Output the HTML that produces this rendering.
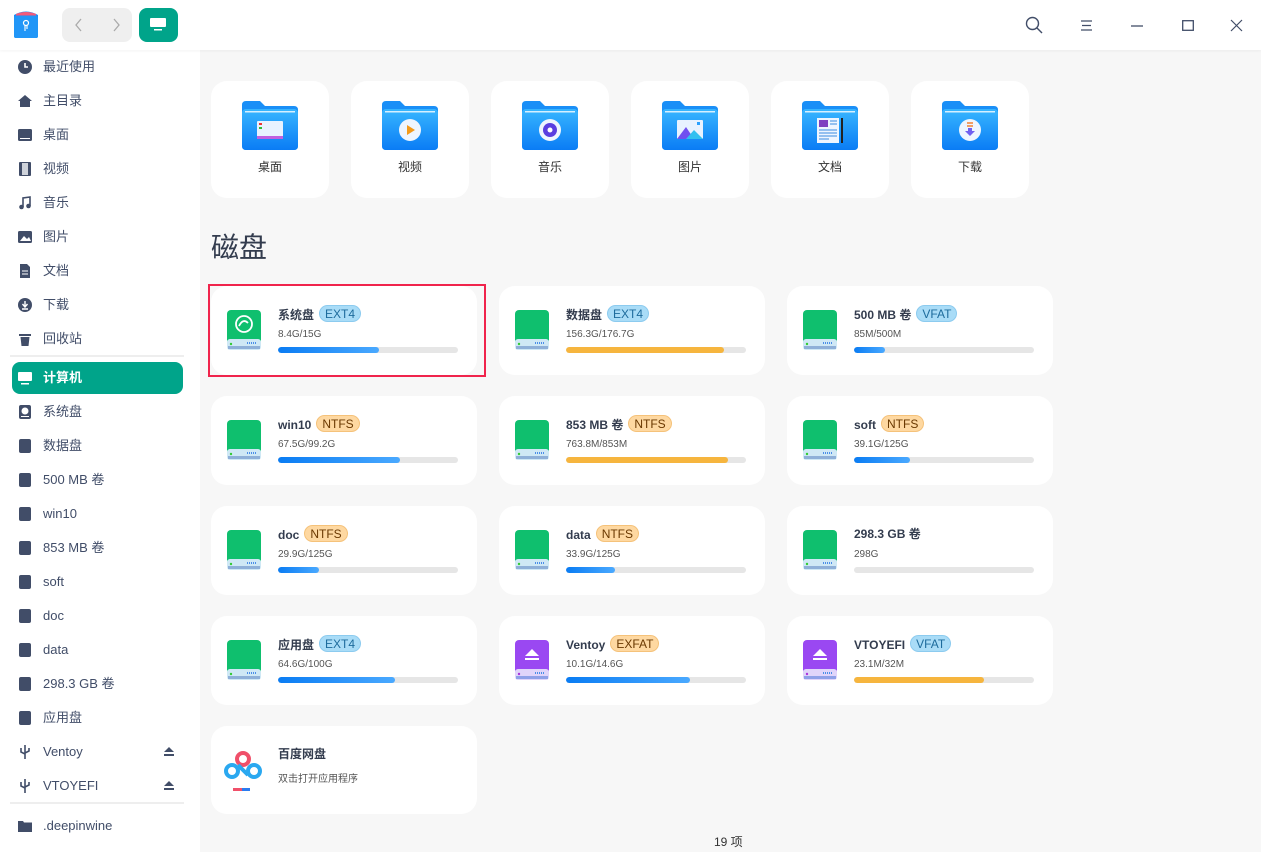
<!DOCTYPE html>
<html><head><meta charset="utf-8">
<style>
*{margin:0;padding:0;box-sizing:border-box}
body{width:1261px;height:852px;overflow:hidden;background:#f7f7f7;font-family:"Liberation Sans","Noto Sans CJK SC",sans-serif;position:relative;color:#414d68}
.side{position:absolute;left:0;top:0;width:200px;height:852px;background:#fff}
.si{position:absolute;left:12px;width:171px;height:32px;font-size:13px;color:#414d68;line-height:32px;padding-left:31px}
.si .ic{position:absolute;left:6px;top:9px;width:14px;height:14px}
.sep{position:absolute;left:10px;width:174px;height:2px;background:#eee}
.top{position:absolute;left:0;top:0;width:1261px;height:50px;background:#fff;box-shadow:0 1px 3px rgba(0,0,0,.05)}
.h{position:absolute;font-size:28px;color:#333c4e;left:211px}
.fc{position:absolute;top:81px;width:118px;height:117px;background:#fff;border-radius:16px}
.fc svg{position:absolute;left:31px;top:20px}
.fc span{position:absolute;left:0;width:118px;text-align:center;top:77px;font-size:12px;color:#333}
.dc{position:absolute;width:266px;height:89px;background:#fff;border-radius:16px}
.dc .icon{position:absolute;left:16px;top:24px}
.dc .nm{position:absolute;left:67px;top:19px;font-size:12px;font-weight:bold;color:#333c4e;white-space:nowrap}
.bd{display:inline-block;font-weight:normal;font-size:12px;padding:0 5px;height:17px;line-height:16px;border-radius:9px;margin-left:5px;vertical-align:1px}
.b1{background:#a9dcf7;color:#1d6b9c;border:1px solid #8ccbef}
.b2{background:#fed8a1;color:#6a3800;border:1px solid #f5c27a}
.dc .sz{position:absolute;left:67px;top:43px;font-size:10px;color:#555}
.dc .bar{position:absolute;left:67px;top:61px;width:180px;height:6px;border-radius:3px;background:#e6e6e6;overflow:hidden}
.bar i{display:block;height:6px;border-radius:3px;background:linear-gradient(90deg,#0a7cf3,#4aa9ff)}
.bar i.o{background:#f6b53e}
</style></head><body>
<div class="side">
<div class="si" style="top:51px"><svg class="ic" viewBox="0 0 14 14"><circle cx="7" cy="7" r="7" fill="#414d68"/><path d="M7 3v4h3" stroke="#fff" stroke-width="1.6" fill="none"/></svg>最近使用</div>
<div class="si" style="top:85px"><svg class="ic" viewBox="0 0 14 14"><path d="M7 1L0 7h2v6h10V7h2z" fill="#414d68"/></svg>主目录</div>
<div class="si" style="top:119px"><svg class="ic" viewBox="0 0 14 14"><rect x="0" y="1" width="14" height="12" rx="1.5" fill="#414d68"/><rect x="2" y="10" width="10" height="1" fill="#fff"/></svg>桌面</div>
<div class="si" style="top:153px"><svg class="ic" viewBox="0 0 14 14"><rect x="1" y="0" width="12" height="14" rx="1" fill="#414d68"/><rect x="4" y="1" width="6" height="12" fill="#fff"/><rect x="4" y="1" width="6" height="12" fill="#8890a2" opacity=".4"/></svg>视频</div>
<div class="si" style="top:187px"><svg class="ic" viewBox="0 0 14 14"><path d="M5 11V2l7-1v9" stroke="#414d68" stroke-width="1.6" fill="none"/><circle cx="3.5" cy="11" r="2.3" fill="#414d68"/><circle cx="10.5" cy="10" r="2.3" fill="#414d68"/></svg>音乐</div>
<div class="si" style="top:221px"><svg class="ic" viewBox="0 0 14 14"><rect x="0" y="1" width="14" height="12" rx="1.5" fill="#414d68"/><path d="M2 11l4-5 3 3 2-2 2 4z" fill="#fff"/></svg>图片</div>
<div class="si" style="top:255px"><svg class="ic" viewBox="0 0 14 14"><path d="M2 0h7l3 3v11H2z" fill="#414d68"/><path d="M4 7h6M4 10h6" stroke="#fff"/></svg>文档</div>
<div class="si" style="top:289px"><svg class="ic" viewBox="0 0 14 14"><circle cx="7" cy="7" r="7" fill="#414d68"/><path d="M7 3v5M4.5 6l2.5 3 2.5-3M4 11h6" stroke="#fff" stroke-width="1.4" fill="none"/></svg>下载</div>
<div class="si" style="top:323px"><svg class="ic" viewBox="0 0 14 14"><path d="M1 2h12v2H1zM2.5 5h9l-1 9h-7z" fill="#414d68"/></svg>回收站</div>
<div class="sep" style="top:355px"></div>
<div class="si" style="top:362px;background:#00a48a;color:#fff;border-radius:8px;font-weight:bold"><svg class="ic" viewBox="0 0 14 14"><rect x="0" y="1" width="14" height="9" rx="1" fill="#fff"/><rect x="3" y="12" width="8" height="1.5" fill="#fff"/></svg>计算机</div>
<div class="si" style="top:396px"><svg class="ic" viewBox="0 0 14 14"><rect x="1" y="0" width="12" height="14" rx="2" fill="#414d68"/><circle cx="7" cy="6" r="3.5" fill="#fff"/><rect x="3" y="11" width="8" height="1" fill="#fff"/></svg>系统盘</div>
<div class="si" style="top:430px"><svg class="ic" viewBox="0 0 14 14"><rect x="1" y="0" width="12" height="14" rx="2" fill="#414d68"/></svg>数据盘</div>
<div class="si" style="top:464px"><svg class="ic" viewBox="0 0 14 14"><rect x="1" y="0" width="12" height="14" rx="2" fill="#414d68"/></svg>500 MB 卷</div>
<div class="si" style="top:498px"><svg class="ic" viewBox="0 0 14 14"><rect x="1" y="0" width="12" height="14" rx="2" fill="#414d68"/></svg>win10</div>
<div class="si" style="top:532px"><svg class="ic" viewBox="0 0 14 14"><rect x="1" y="0" width="12" height="14" rx="2" fill="#414d68"/></svg>853 MB 卷</div>
<div class="si" style="top:566px"><svg class="ic" viewBox="0 0 14 14"><rect x="1" y="0" width="12" height="14" rx="2" fill="#414d68"/></svg>soft</div>
<div class="si" style="top:600px"><svg class="ic" viewBox="0 0 14 14"><rect x="1" y="0" width="12" height="14" rx="2" fill="#414d68"/></svg>doc</div>
<div class="si" style="top:634px"><svg class="ic" viewBox="0 0 14 14"><rect x="1" y="0" width="12" height="14" rx="2" fill="#414d68"/></svg>data</div>
<div class="si" style="top:668px"><svg class="ic" viewBox="0 0 14 14"><rect x="1" y="0" width="12" height="14" rx="2" fill="#414d68"/></svg>298.3 GB 卷</div>
<div class="si" style="top:702px"><svg class="ic" viewBox="0 0 14 14"><rect x="1" y="0" width="12" height="14" rx="2" fill="#414d68"/></svg>应用盘</div>
<div class="si" style="top:736px"><svg class="ic" viewBox="0 0 14 14"><path d="M7 0v14M3 3v4l4 2M11 3v3l-4 2" stroke="#414d68" stroke-width="1.6" fill="none"/></svg>Ventoy<svg style="position:absolute;left:152px;top:11px" width="10" height="9"><path d="M5 0l5 5H0z M0 7h10v2H0z" fill="#414d68"/></svg></div>
<div class="si" style="top:770px"><svg class="ic" viewBox="0 0 14 14"><path d="M7 0v14M3 3v4l4 2M11 3v3l-4 2" stroke="#414d68" stroke-width="1.6" fill="none"/></svg>VTOYEFI<svg style="position:absolute;left:152px;top:11px" width="10" height="9"><path d="M5 0l5 5H0z M0 7h10v2H0z" fill="#414d68"/></svg></div>
<div class="sep" style="top:802px"></div>
<div class="si" style="top:810px"><svg class="ic" viewBox="0 0 14 14"><path d="M0 2h5l1 1.5h8V13H0z" fill="#414d68"/></svg>.deepinwine</div>
</div>

<div class="h" style="top:14px">我的目录</div>
<div class="top">
<svg style="position:absolute;left:12px;top:9px" width="28" height="30" viewBox="0 0 28 30"><path d="M2 6 Q14 -1 26 6 V27 Q26 29 24 29 H4 Q2 29 2 27z" fill="#1e8cf5"/><path d="M4 5 Q14 1 24 5 V6.5 H4z" fill="#f35a7a"/><rect x="2" y="7" width="24" height="22" rx="2" fill="#2196f7"/><circle cx="14" cy="14" r="2.5" stroke="#fff" stroke-width="1.2" fill="none"/><path d="M13 16v6M15 16v4" stroke="#fff" stroke-width="1.1"/></svg>
<div style="position:absolute;left:62px;top:8px;width:70px;height:34px;background:#efefef;border-radius:8px"></div>
<svg style="position:absolute;left:74px;top:18px" width="10" height="14"><path d="M7 1L2 7l5 6" stroke="#aaa" stroke-width="1.3" fill="none"/></svg>
<svg style="position:absolute;left:111px;top:18px" width="10" height="14"><path d="M3 1l5 6-5 6" stroke="#aaa" stroke-width="1.3" fill="none"/></svg>
<div style="position:absolute;left:139px;top:8px;width:39px;height:34px;background:#00a48a;border-radius:8px"></div>
<svg style="position:absolute;left:150px;top:18px" width="16" height="13"><rect x="0" y="0" width="16" height="9" rx="1" fill="#fff"/><rect x="4" y="11" width="8" height="1.5" fill="#fff"/></svg>
<svg style="position:absolute;left:1025px;top:16px" width="18" height="18"><circle cx="7.5" cy="7.5" r="6" stroke="#414d68" stroke-width="1.4" fill="none"/><path d="M12 12l5 5" stroke="#414d68" stroke-width="1.4"/></svg>
<svg style="position:absolute;left:1081px;top:20px" width="12" height="11"><path d="M0 1h11M1 5.5h9M0 10h11" stroke="#414d68" stroke-width="1.2"/></svg>
<svg style="position:absolute;left:1131px;top:25px" width="12" height="2"><path d="M0 1h12" stroke="#414d68" stroke-width="1.3"/></svg>
<svg style="position:absolute;left:1182px;top:20px" width="12" height="11"><rect x=".7" y=".7" width="10.6" height="9.6" stroke="#414d68" stroke-width="1.3" fill="none"/></svg>
<svg style="position:absolute;left:1230px;top:19px" width="13" height="13"><path d="M1 1l11 11M12 1L1 12" stroke="#414d68" stroke-width="1.2"/></svg>
</div>

<svg width="0" height="0" style="position:absolute"><defs><linearGradient id="fg" x1="0" y1="0" x2="0" y2="1"><stop offset="0" stop-color="#38b6ff"/><stop offset="1" stop-color="#0a7cf5"/></linearGradient></defs></svg>
<div class="fc" style="left:211px"><svg width="56" height="50" viewBox="0 0 56 50"><path d="M0 4Q0 0 4 0H18l5 5H52Q56 5 56 9V45Q56 49 52 49H4Q0 49 0 45z" fill="#1a8ff7"/><rect x="0" y="8" width="56" height="41" rx="4" fill="url(#fg)"/><rect x="3" y="10" width="50" height="1.5" fill="#fff" opacity=".8"/><rect x="15" y="20" width="26" height="18" rx="1" fill="#e8f2ff"/><rect x="15" y="35" width="26" height="3" fill="#c060e0"/><rect x="17" y="22" width="3" height="2" fill="#e33"/><rect x="17" y="26" width="3" height="2" fill="#3b3"/></svg><span>桌面</span></div>
<div class="fc" style="left:351px"><svg width="56" height="50" viewBox="0 0 56 50"><path d="M0 4Q0 0 4 0H18l5 5H52Q56 5 56 9V45Q56 49 52 49H4Q0 49 0 45z" fill="#1a8ff7"/><rect x="0" y="8" width="56" height="41" rx="4" fill="url(#fg)"/><rect x="3" y="10" width="50" height="1.5" fill="#fff" opacity=".8"/><circle cx="28" cy="29" r="11" fill="#eef5ff"/><path d="M25 24v10l8-5z" fill="#f39a1a"/></svg><span>视频</span></div>
<div class="fc" style="left:491px"><svg width="56" height="50" viewBox="0 0 56 50"><path d="M0 4Q0 0 4 0H18l5 5H52Q56 5 56 9V45Q56 49 52 49H4Q0 49 0 45z" fill="#1a8ff7"/><rect x="0" y="8" width="56" height="41" rx="4" fill="url(#fg)"/><rect x="3" y="10" width="50" height="1.5" fill="#fff" opacity=".8"/><circle cx="28" cy="29" r="11" fill="#eef5ff"/><circle cx="28" cy="29" r="7" fill="#5a3ee0"/><circle cx="28" cy="29" r="2.5" fill="#fff"/></svg><span>音乐</span></div>
<div class="fc" style="left:631px"><svg width="56" height="50" viewBox="0 0 56 50"><path d="M0 4Q0 0 4 0H18l5 5H52Q56 5 56 9V45Q56 49 52 49H4Q0 49 0 45z" fill="#1a8ff7"/><rect x="0" y="8" width="56" height="41" rx="4" fill="url(#fg)"/><rect x="3" y="10" width="50" height="1.5" fill="#fff" opacity=".8"/><rect x="15" y="19" width="26" height="19" rx="1" fill="#e8f2ff"/><path d="M15 38l9-12 8 12z" fill="#7050f0"/><path d="M24 38l8-9 9 9z" fill="#30c0f0"/><rect x="35" y="21" width="3" height="3" fill="#2aa0ff"/></svg><span>图片</span></div>
<div class="fc" style="left:771px"><svg width="56" height="50" viewBox="0 0 56 50"><path d="M0 4Q0 0 4 0H18l5 5H52Q56 5 56 9V45Q56 49 52 49H4Q0 49 0 45z" fill="#1a8ff7"/><rect x="0" y="8" width="56" height="41" rx="4" fill="url(#fg)"/><rect x="3" y="10" width="50" height="1.5" fill="#fff" opacity=".8"/><rect x="15" y="17" width="22" height="25" fill="#eef5ff"/><rect x="17" y="19" width="9" height="7" fill="#8040c0"/><path d="M28 20h7M28 23h7M17 29h18M17 32h18M17 35h18M17 38h10" stroke="#3a8ae0"/><rect x="39" y="17" width="2" height="25" fill="#222"/></svg><span>文档</span></div>
<div class="fc" style="left:911px"><svg width="56" height="50" viewBox="0 0 56 50"><path d="M0 4Q0 0 4 0H18l5 5H52Q56 5 56 9V45Q56 49 52 49H4Q0 49 0 45z" fill="#1a8ff7"/><rect x="0" y="8" width="56" height="41" rx="4" fill="url(#fg)"/><rect x="3" y="10" width="50" height="1.5" fill="#fff" opacity=".8"/><circle cx="28" cy="29" r="11" fill="#eef5ff"/><path d="M25 22h6M25 25h6" stroke="#f08030" stroke-width="1.5"/><path d="M26 27h4v3h3l-5 5-5-5h3z" fill="#7060f0"/></svg><span>下载</span></div>

<div class="h" style="top:226px">磁盘</div>

<div class="dc" style="left:211px;top:286px"><svg class="icon" width="34" height="40" viewBox="0 0 34 40"><rect x="0" y="0" width="34" height="34" rx="4" fill="#0fbf6e"/><rect x="0" y="29" width="34" height="11" rx="3" fill="#cfe8f5"/><rect x="1" y="36" width="32" height="3" fill="#8fb0d8"/><circle cx="4" cy="34" r="1.2" fill="#3c3"/><path d="M20 33h10" stroke="#4a8ee8" stroke-dasharray="1 1" stroke-width="2"/><circle cx="17" cy="14" r="8" stroke="#fff" stroke-width="1.8" fill="none"/><path d="M12 16q4-8 9-3" stroke="#fff" stroke-width="1.8" fill="none"/></svg><div class="nm">系统盘<span class="bd b1">EXT4</span></div><div class="sz">8.4G/15G</div><div class="bar"><i style="width:56%"></i></div></div>
<div style="position:absolute;left:208px;top:284px;width:278px;height:93px;border:2px solid #f0244c"></div>

<div class="dc" style="left:499px;top:286px"><svg class="icon" width="34" height="40" viewBox="0 0 34 40"><rect x="0" y="0" width="34" height="34" rx="4" fill="#0fbf6e"/><rect x="0" y="29" width="34" height="11" rx="3" fill="#cfe8f5"/><rect x="1" y="36" width="32" height="3" fill="#8fb0d8"/><circle cx="4" cy="34" r="1.2" fill="#3c3"/><path d="M20 33h10" stroke="#4a8ee8" stroke-dasharray="1 1" stroke-width="2"/></svg><div class="nm">数据盘<span class="bd b1">EXT4</span></div><div class="sz">156.3G/176.7G</div><div class="bar"><i class="o" style="width:88%"></i></div></div>
<div class="dc" style="left:787px;top:286px"><svg class="icon" width="34" height="40" viewBox="0 0 34 40"><rect x="0" y="0" width="34" height="34" rx="4" fill="#0fbf6e"/><rect x="0" y="29" width="34" height="11" rx="3" fill="#cfe8f5"/><rect x="1" y="36" width="32" height="3" fill="#8fb0d8"/><circle cx="4" cy="34" r="1.2" fill="#3c3"/><path d="M20 33h10" stroke="#4a8ee8" stroke-dasharray="1 1" stroke-width="2"/></svg><div class="nm">500 MB 卷<span class="bd b1">VFAT</span></div><div class="sz">85M/500M</div><div class="bar"><i style="width:17%"></i></div></div>

<div class="dc" style="left:211px;top:396px"><svg class="icon" width="34" height="40" viewBox="0 0 34 40"><rect x="0" y="0" width="34" height="34" rx="4" fill="#0fbf6e"/><rect x="0" y="29" width="34" height="11" rx="3" fill="#cfe8f5"/><rect x="1" y="36" width="32" height="3" fill="#8fb0d8"/><circle cx="4" cy="34" r="1.2" fill="#3c3"/><path d="M20 33h10" stroke="#4a8ee8" stroke-dasharray="1 1" stroke-width="2"/></svg><div class="nm">win10<span class="bd b2">NTFS</span></div><div class="sz">67.5G/99.2G</div><div class="bar"><i style="width:68%"></i></div></div>
<div class="dc" style="left:499px;top:396px"><svg class="icon" width="34" height="40" viewBox="0 0 34 40"><rect x="0" y="0" width="34" height="34" rx="4" fill="#0fbf6e"/><rect x="0" y="29" width="34" height="11" rx="3" fill="#cfe8f5"/><rect x="1" y="36" width="32" height="3" fill="#8fb0d8"/><circle cx="4" cy="34" r="1.2" fill="#3c3"/><path d="M20 33h10" stroke="#4a8ee8" stroke-dasharray="1 1" stroke-width="2"/></svg><div class="nm">853 MB 卷<span class="bd b2">NTFS</span></div><div class="sz">763.8M/853M</div><div class="bar"><i class="o" style="width:90%"></i></div></div>
<div class="dc" style="left:787px;top:396px"><svg class="icon" width="34" height="40" viewBox="0 0 34 40"><rect x="0" y="0" width="34" height="34" rx="4" fill="#0fbf6e"/><rect x="0" y="29" width="34" height="11" rx="3" fill="#cfe8f5"/><rect x="1" y="36" width="32" height="3" fill="#8fb0d8"/><circle cx="4" cy="34" r="1.2" fill="#3c3"/><path d="M20 33h10" stroke="#4a8ee8" stroke-dasharray="1 1" stroke-width="2"/></svg><div class="nm">soft<span class="bd b2">NTFS</span></div><div class="sz">39.1G/125G</div><div class="bar"><i style="width:31%"></i></div></div>

<div class="dc" style="left:211px;top:506px"><svg class="icon" width="34" height="40" viewBox="0 0 34 40"><rect x="0" y="0" width="34" height="34" rx="4" fill="#0fbf6e"/><rect x="0" y="29" width="34" height="11" rx="3" fill="#cfe8f5"/><rect x="1" y="36" width="32" height="3" fill="#8fb0d8"/><circle cx="4" cy="34" r="1.2" fill="#3c3"/><path d="M20 33h10" stroke="#4a8ee8" stroke-dasharray="1 1" stroke-width="2"/></svg><div class="nm">doc<span class="bd b2">NTFS</span></div><div class="sz">29.9G/125G</div><div class="bar"><i style="width:23%"></i></div></div>
<div class="dc" style="left:499px;top:506px"><svg class="icon" width="34" height="40" viewBox="0 0 34 40"><rect x="0" y="0" width="34" height="34" rx="4" fill="#0fbf6e"/><rect x="0" y="29" width="34" height="11" rx="3" fill="#cfe8f5"/><rect x="1" y="36" width="32" height="3" fill="#8fb0d8"/><circle cx="4" cy="34" r="1.2" fill="#3c3"/><path d="M20 33h10" stroke="#4a8ee8" stroke-dasharray="1 1" stroke-width="2"/></svg><div class="nm">data<span class="bd b2">NTFS</span></div><div class="sz">33.9G/125G</div><div class="bar"><i style="width:27%"></i></div></div>
<div class="dc" style="left:787px;top:506px"><svg class="icon" width="34" height="40" viewBox="0 0 34 40"><rect x="0" y="0" width="34" height="34" rx="4" fill="#0fbf6e"/><rect x="0" y="29" width="34" height="11" rx="3" fill="#cfe8f5"/><rect x="1" y="36" width="32" height="3" fill="#8fb0d8"/><circle cx="4" cy="34" r="1.2" fill="#3c3"/><path d="M20 33h10" stroke="#4a8ee8" stroke-dasharray="1 1" stroke-width="2"/></svg><div class="nm">298.3 GB 卷</div><div class="sz">298G</div><div class="bar"><i style="width:0"></i></div></div>

<div class="dc" style="left:211px;top:616px"><svg class="icon" width="34" height="40" viewBox="0 0 34 40"><rect x="0" y="0" width="34" height="34" rx="4" fill="#0fbf6e"/><rect x="0" y="29" width="34" height="11" rx="3" fill="#cfe8f5"/><rect x="1" y="36" width="32" height="3" fill="#8fb0d8"/><circle cx="4" cy="34" r="1.2" fill="#3c3"/><path d="M20 33h10" stroke="#4a8ee8" stroke-dasharray="1 1" stroke-width="2"/></svg><div class="nm">应用盘<span class="bd b1">EXT4</span></div><div class="sz">64.6G/100G</div><div class="bar"><i style="width:65%"></i></div></div>
<div class="dc" style="left:499px;top:616px"><svg class="icon" width="34" height="40" viewBox="0 0 34 40"><rect x="0" y="0" width="34" height="34" rx="4" fill="#9a48f2"/><rect x="0" y="29" width="34" height="11" rx="3" fill="#e0d4fa"/><rect x="1" y="36" width="32" height="3" fill="#8fa0e8"/><circle cx="4" cy="34" r="1.2" fill="#a3d"/><path d="M20 33h10" stroke="#4a8ee8" stroke-dasharray="1 1" stroke-width="2"/><path d="M17 9l7 7H10z" fill="#fff"/><rect x="10" y="18" width="14" height="2" fill="#fff"/></svg><div class="nm">Ventoy<span class="bd b2">EXFAT</span></div><div class="sz">10.1G/14.6G</div><div class="bar"><i style="width:69%"></i></div></div>
<div class="dc" style="left:787px;top:616px"><svg class="icon" width="34" height="40" viewBox="0 0 34 40"><rect x="0" y="0" width="34" height="34" rx="4" fill="#9a48f2"/><rect x="0" y="29" width="34" height="11" rx="3" fill="#e0d4fa"/><rect x="1" y="36" width="32" height="3" fill="#8fa0e8"/><circle cx="4" cy="34" r="1.2" fill="#a3d"/><path d="M20 33h10" stroke="#4a8ee8" stroke-dasharray="1 1" stroke-width="2"/><path d="M17 9l7 7H10z" fill="#fff"/><rect x="10" y="18" width="14" height="2" fill="#fff"/></svg><div class="nm">VTOYEFI<span class="bd b1">VFAT</span></div><div class="sz">23.1M/32M</div><div class="bar"><i class="o" style="width:72%"></i></div></div>

<div class="dc" style="left:211px;top:726px;height:88px"><svg class="icon" style="left:12px;top:24px" width="40" height="42" viewBox="0 0 40 42"><circle cx="20" cy="9" r="6" stroke="#f0506a" stroke-width="4" fill="none"/><circle cx="9" cy="21" r="6" stroke="#2aa8f0" stroke-width="4" fill="none"/><circle cx="31" cy="21" r="6" stroke="#2aa8f0" stroke-width="4" fill="none"/><path d="M15 15l10 10" stroke="#2aa8f0" stroke-width="4"/><rect x="10" y="38" width="9" height="3" fill="#f0506a"/><rect x="19" y="38" width="8" height="3" fill="#2a7cf0"/></svg><div class="nm">百度网盘</div><div class="sz" style="top:44px">双击打开应用程序</div></div>

<div style="position:absolute;left:714px;top:833px;font-size:12px;color:#333">19 项</div>
</body></html>
